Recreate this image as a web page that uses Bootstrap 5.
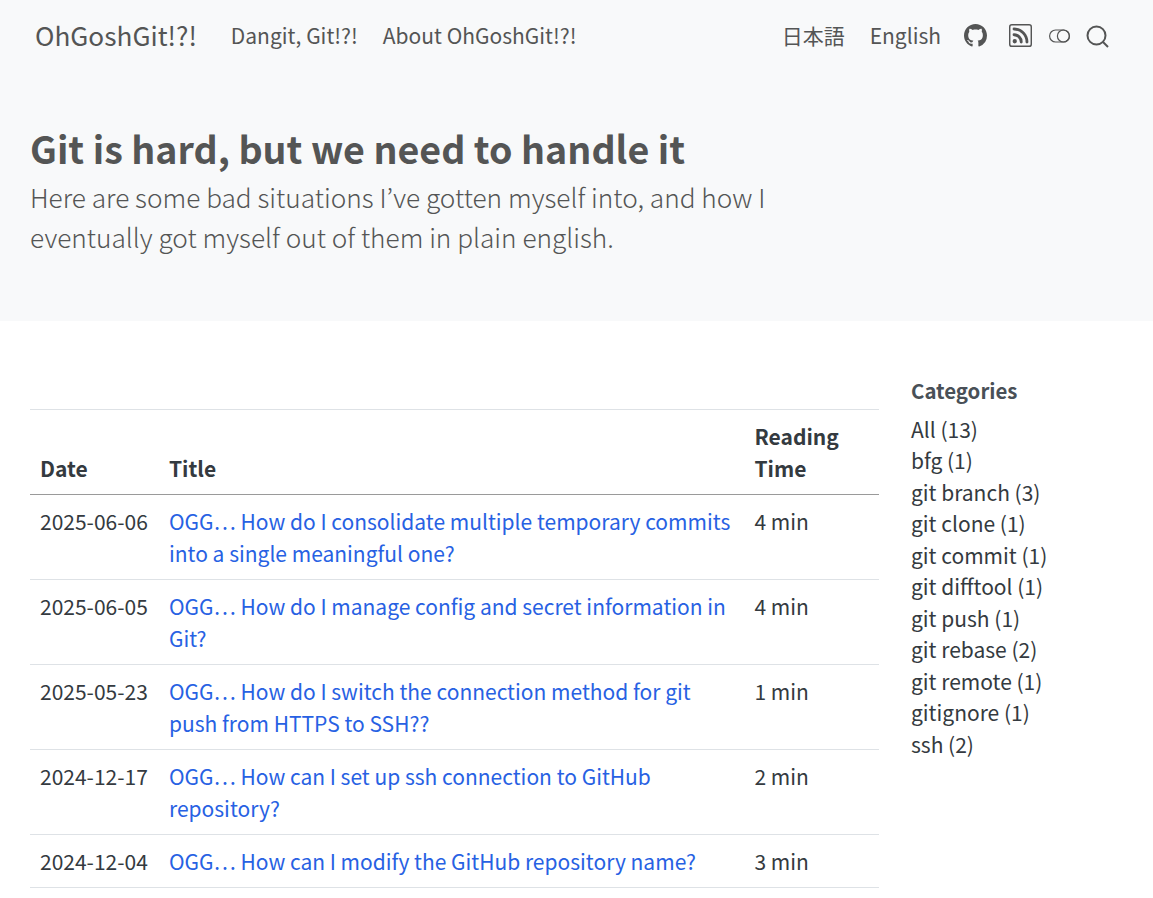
<!DOCTYPE html>
<html lang="en">
<head>
    <meta charset="UTF-8">
    <meta name="viewport" content="width=device-width, initial-scale=1.0">
    <title>OhGoshGit!?!</title>
    <link rel="stylesheet" href="https://cdn.jsdelivr.net/npm/bootstrap@5.3.0/dist/css/bootstrap.min.css">
    <script defer src="https://cdn.jsdelivr.net/npm/bootstrap@5.3.0/dist/js/bootstrap.bundle.min.js"></script>
    <style>
        body {
            font-family: "Noto Sans CJK JP", "Liberation Sans", sans-serif;
            font-size: 21px;
            line-height: 31.5px;
            color: #343a40;
            overflow: hidden;
        }
        .site-band { background: #f8f9fa; height: 321px; }
        .site-nav { height: 71px; padding: 0 44px 0 35px; }
        .site-nav a { color: #545555; text-decoration: none; }
        .site-brand { font-size: 26.2px; margin-right: 34px; }
        .site-links { gap: 25px; }
        .nav-en { margin-left: 25px; }
        .nav-github { margin-left: 23px; margin-top: -1px; }
        .nav-rss { margin-left: 22px; }
        .nav-toggle { margin-left: 17px; }
        .nav-search { margin-left: 16px; margin-top: 2px; }
        .site-hero { padding: 50px 30px 0; max-width: 800px; color: #545555; }
        .site-hero h1 { font-size: 37.6px; line-height: 50px; font-weight: 700; margin: 2px 0 4px; }
        .site-sub { font-size: 26.22px; line-height: 40px; font-weight: 300; }
        .site-main { padding: 88px 0 0 30px; }
        .post-col { width: 849px; flex: none; }
        .post-table { margin: 0; color: #343a40; table-layout: fixed; line-height: 32px; }
        .post-table th, .post-table td { padding: 10px; }
        .post-table thead th { vertical-align: bottom; font-weight: 700; border-top: 1px solid #dee2e6; border-bottom: 1px solid #9a9a9a; }
        .post-table a { color: #2761e3; text-decoration: none; }
        .date-head { width: 129px; }
        .time-head { width: 134.5px; }
        .cat-col { margin-left: 32px; margin-top: -34px; }
        .cat-title { font-weight: 700; font-size: 20.4px; color: #495057; margin-bottom: 7px; }
    </style>
</head>
<body>
    <header class="site-band">
        <nav class="site-nav d-flex align-items-center justify-content-between">
            <div class="d-flex align-items-center">
                <a class="site-brand" href="#">OhGoshGit!?!</a>
                <div class="site-links d-flex">
                    <a href="#">Dangit, Git!?!</a>
                    <a href="#">About OhGoshGit!?!</a>
                </div>
            </div>
            <div class="d-flex align-items-center">
                <a href="#">日本語</a>
                <a href="#" class="nav-en">English</a>
                <a href="#" class="d-flex nav-github"><svg width="23" height="23" viewBox="0 0 16 16" fill="#545555"><path d="M8 0C3.58 0 0 3.58 0 8c0 3.54 2.29 6.53 5.47 7.59.4.07.55-.17.55-.38 0-.19-.01-.82-.01-1.49-2.01.37-2.53-.49-2.69-.94-.09-.23-.48-.94-.82-1.13-.28-.15-.68-.52-.01-.53.63-.01 1.08.58 1.23.82.72 1.21 1.87.87 2.33.66.07-.52.28-.87.51-1.07-1.78-.2-3.64-.89-3.64-3.95 0-.87.31-1.59.82-2.15-.08-.2-.36-1.02.08-2.12 0 0 .67-.21 2.2.82.64-.18 1.32-.27 2-.27s1.36.09 2 .27c1.53-1.04 2.2-.82 2.2-.82.44 1.1.16 1.92.08 2.12.51.56.82 1.27.82 2.15 0 3.07-1.87 3.75-3.65 3.95.29.25.54.73.54 1.48 0 1.07-.01 1.93-.01 2.2 0 .21.15.46.55.38A8.01 8.01 0 0 0 16 8c0-4.42-3.58-8-8-8z"/></svg></a>
                <a href="#" class="d-flex nav-rss"><svg width="23" height="23" viewBox="0 0 16 16" fill="#545555"><path d="M14 1a1 1 0 0 1 1 1v12a1 1 0 0 1-1 1H2a1 1 0 0 1-1-1V2a1 1 0 0 1 1-1h12zM2 0a2 2 0 0 0-2 2v12a2 2 0 0 0 2 2h12a2 2 0 0 0 2-2V2a2 2 0 0 0-2-2H2z"/><path d="M5.5 12a1.5 1.5 0 1 1-3 0 1.5 1.5 0 0 1 3 0zm-3-8.5a1 1 0 0 1 1-1c5.523 0 10 4.477 10 10a1 1 0 1 1-2 0 8 8 0 0 0-8-8 1 1 0 0 1-1-1zm0 4a1 1 0 0 1 1-1 6 6 0 0 1 6 6 1 1 0 1 1-2 0 4 4 0 0 0-4-4 1 1 0 0 1-1-1z"/></svg></a>
                <a href="#" class="d-flex nav-toggle"><svg width="21" height="14" viewBox="0 0 21 14" fill="none" stroke="#545555" stroke-width="1.2"><rect x=".6" y="1" width="19.8" height="12" rx="6"/><circle cx="14.4" cy="7" r="6"/></svg></a>
                <a href="#" class="d-flex nav-search"><svg width="23" height="23" viewBox="0 0 23 23" fill="none" stroke="#545555" stroke-width="2"><circle cx="10.5" cy="10.5" r="9"/><path d="M17 17l5 5"/></svg></a>
            </div>
        </nav>
        <div class="site-hero">
            <h1>Git is hard, but we need to handle it</h1>
            <div class="site-sub">Here are some bad situations I’ve gotten myself into, and how I eventually got myself out of them in plain english.</div>
        </div>
    </header>
    <main class="site-main d-flex">
        <div class="post-col">
            <table class="table post-table">
                <thead>
                    <tr><th class="date-head">Date</th><th>Title</th><th class="time-head">Reading Time</th></tr>
                </thead>
                <tbody>
                    <tr><td>2025-06-06</td><td><a href="#">OGG… How do I consolidate multiple temporary commits into a single meaningful one?</a></td><td>4 min</td></tr>
                    <tr><td>2025-06-05</td><td><a href="#">OGG… How do I manage config and secret information in Git?</a></td><td>4 min</td></tr>
                    <tr><td>2025-05-23</td><td><a href="#">OGG… How do I switch the connection method for git push from HTTPS to SSH??</a></td><td>1 min</td></tr>
                    <tr><td>2024-12-17</td><td><a href="#">OGG… How can I set up ssh connection to GitHub repository?</a></td><td>2 min</td></tr>
                    <tr><td>2024-12-04</td><td><a href="#">OGG… How can I modify the GitHub repository name?</a></td><td>3 min</td></tr>
                </tbody>
            </table>
        </div>
        <aside class="cat-col">
            <div class="cat-title">Categories</div>
            <div>All (13)</div>
            <div>bfg (1)</div>
            <div>git branch (3)</div>
            <div>git clone (1)</div>
            <div>git commit (1)</div>
            <div>git difftool (1)</div>
            <div>git push (1)</div>
            <div>git rebase (2)</div>
            <div>git remote (1)</div>
            <div>gitignore (1)</div>
            <div>ssh (2)</div>
        </aside>
    </main>
</body>
</html>
